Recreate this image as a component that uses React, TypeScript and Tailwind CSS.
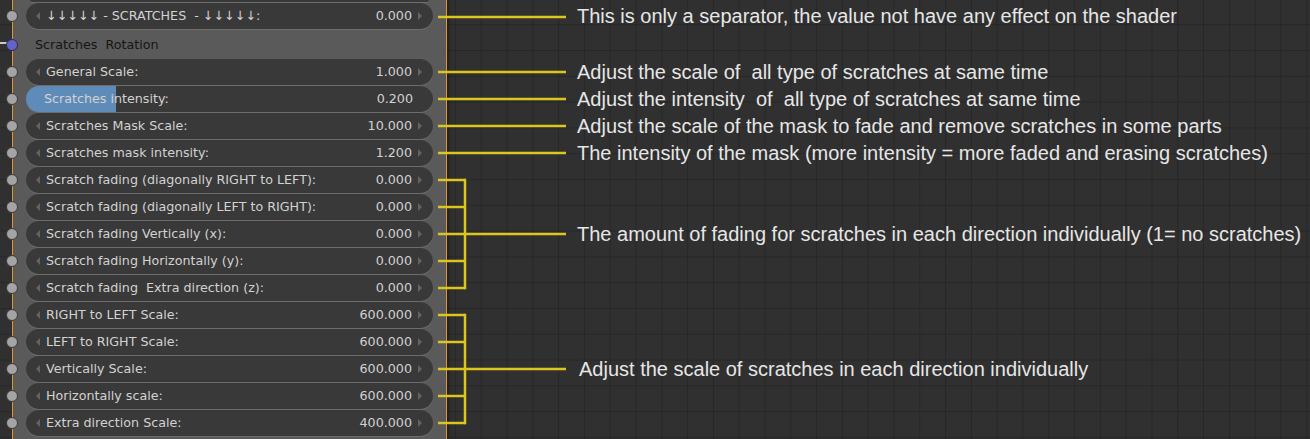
import type { CSSProperties } from "react";

type Connector = "none" | "line" | "top" | "mid" | "midLong" | "bottom";

type Field = {
    label: string;
    value: string;
    connector: Connector;
    note?: string;
    noteGap?: number;
    fill?: number;
};

const fields: Field[] = [
    { label: "General Scale:", value: "1.000", connector: "line", note: "Adjust the scale of  all type of scratches at same time" },
    {
        label: "Scratches intensity:",
        value: "0.200",
        connector: "line",
        fill: 90,
        note: "Adjust the intensity  of  all type of scratches at same time",
    },
    {
        label: "Scratches Mask Scale:",
        value: "10.000",
        connector: "line",
        note: "Adjust the scale of the mask to fade and remove scratches in some parts",
    },
    {
        label: "Scratches mask intensity:",
        value: "1.200",
        connector: "line",
        note: "The intensity of the mask (more intensity = more faded and erasing scratches)",
    },
    { label: "Scratch fading (diagonally RIGHT to LEFT):", value: "0.000", connector: "top" },
    { label: "Scratch fading (diagonally LEFT to RIGHT):", value: "0.000", connector: "mid" },
    {
        label: "Scratch fading Vertically (x):",
        value: "0.000",
        connector: "midLong",
        note: "The amount of fading for scratches in each direction individually (1= no scratches)",
    },
    { label: "Scratch fading Horizontally (y):", value: "0.000", connector: "mid" },
    { label: "Scratch fading  Extra direction (z):", value: "0.000", connector: "bottom" },
    { label: "RIGHT to LEFT Scale:", value: "600.000", connector: "top" },
    { label: "LEFT to RIGHT Scale:", value: "600.000", connector: "mid" },
    {
        label: "Vertically Scale:",
        value: "600.000",
        connector: "midLong",
        noteGap: 13,
        note: "Adjust the scale of scratches in each direction individually",
    },
    { label: "Horizontally scale:", value: "600.000", connector: "mid" },
    { label: "Extra direction Scale:", value: "400.000", connector: "bottom" },
];

const separator: Field = {
    label: "↓↓↓↓↓ - SCRATCHES  - ↓↓↓↓↓:",
    value: "0.000",
    connector: "line",
    note: "This is only a separator, the value not have any effect on the shader",
};

const YELLOW = "#dcc51c";

const Arrow = ({ dir }: { dir: "left" | "right" }) => (
    <svg width={4} height={8} viewBox="0 0 4 8" className="shrink-0">
        <polygon points={dir === "left" ? "4,0 0,4 4,8" : "0,0 4,4 0,8"} fill="#636363" />
    </svg>
);

const Socket = ({ blue }: { blue?: boolean }) => (
    <div
        className={
            blue
                ? "h-3 w-3 shrink-0 rounded-full border border-[#2b2b55] bg-[#6464c8]"
                : "-ml-[7px] h-3 w-3 shrink-0 rounded-full border border-[#3a3a3a] bg-[#a4a4a4]"
        }
    />
);

const NumberField = ({ field }: { field: Field }) => {
    const style: CSSProperties | undefined = field.fill
        ? { background: `linear-gradient(to right, #5f8bb8 ${field.fill}px, #393939 ${field.fill}px)` }
        : undefined;

    return (
        <div
            style={style}
            className="ml-[8px] flex h-[26px] w-[407px] shrink-0 items-center rounded-full bg-[#393939] shadow-[0_1px_0_#6d6d6d] text-[12.7px] text-[#d2d2d2]"
        >
            {field.fill ? (
                <>
                    <span className="flex-1 whitespace-pre pl-[18px]">{field.label}</span>
                    <span className="pr-[20px]">{field.value}</span>
                </>
            ) : (
                <>
                    <div className="ml-[10px]">
                        <Arrow dir="left" />
                    </div>
                    <span className="ml-[6px] flex-1 whitespace-pre">{field.label}</span>
                    <span>{field.value}</span>
                    <div className="ml-[6px] mr-[11px]">
                        <Arrow dir="right" />
                    </div>
                </>
            )}
        </div>
    );
};

const FieldRow = ({ field }: { field: Field }) => (
    <div className="h-[27px] shrink-0">
        <div className="flex h-[26px] items-center">
            <Socket />
            <NumberField field={field} />
        </div>
    </div>
);

const Lines = ({ kind, y }: { kind: Connector; y: number }) => {
    if (kind === "none") return <div className="w-[128px] shrink-0" />;
    const long = kind === "line" || kind === "midLong";

    return (
        <svg width={128} height={27} className="shrink-0">
            <line x1={0} y1={y} x2={long ? 128 : 27} y2={y} stroke={YELLOW} strokeWidth={2.5} />
            {kind !== "line" && (
                <line
                    x1={27}
                    x2={27}
                    y1={kind === "top" ? y - 1.25 : 0}
                    y2={kind === "bottom" ? y + 1.25 : 27}
                    stroke={YELLOW}
                    strokeWidth={2.5}
                />
            )}
        </svg>
    );
};

const NoteRow = ({ field, y = 13 }: { field: Field; y?: number }) => (
    <div className="flex h-[27px] shrink-0 items-center">
        <Lines kind={field.connector} y={y} />
        {field.note && (
            <span
                className={
                    field.noteGap === 13
                        ? "ml-[13px] whitespace-pre text-[20px] leading-[27px] text-[#e6e6e6]"
                        : "ml-[11px] whitespace-pre text-[20px] leading-[27px] text-[#e6e6e6]"
                }
            >
                {field.note}
            </span>
        )}
    </div>
);

export default function App() {
    return (
        <div className="flex h-[439px] w-[1310px] overflow-hidden bg-[#303030] bg-[linear-gradient(to_right,#272727_1px,transparent_1px),linear-gradient(to_bottom,#272727_1px,transparent_1px)] bg-[size:25.8px_25.8px] bg-[position:16.4px_24.2px]">
            <div className="w-[12px] shrink-0" />

            {/* node */}
            <div className="flex w-[435px] shrink-0 flex-col border-x border-[#e8912d] bg-[#5a5a5a] font-['DejaVu_Sans',sans-serif] shadow-[2px_0_3px_rgba(0,0,0,0.35)]">
                <div className="h-[3px] shrink-0">
                    <div className="ml-[17px] h-[2px] w-[399px] rounded-b-[4px] bg-[#393939] shadow-[0_1px_0_#6d6d6d]" />
                </div>
                <FieldRow field={separator} />
                <div className="flex h-[29px] shrink-0 items-center">
                    <div className="-ml-[13px] mb-[3px] h-[2px] w-[8px] shrink-0 bg-[#cacaca]" />
                    <div className="-ml-[2px]">
                        <Socket blue />
                    </div>
                    <span className="ml-[17px] whitespace-pre text-[12.7px] text-[#151515]">Scratches  Rotation</span>
                </div>
                {fields.map(f => (
                    <FieldRow key={f.label} field={f} />
                ))}
                <div className="flex-1" />
            </div>

            {/* annotations */}
            <div className="relative z-10 -ml-[9px] flex flex-1 flex-col font-['Liberation_Sans',Arial,sans-serif]">
                <div className="h-[3px] shrink-0" />
                <NoteRow field={separator} y={14} />
                <div className="h-[29px] shrink-0" />
                {fields.map(f => (
                    <NoteRow key={f.label} field={f} />
                ))}
            </div>
        </div>
    );
}
